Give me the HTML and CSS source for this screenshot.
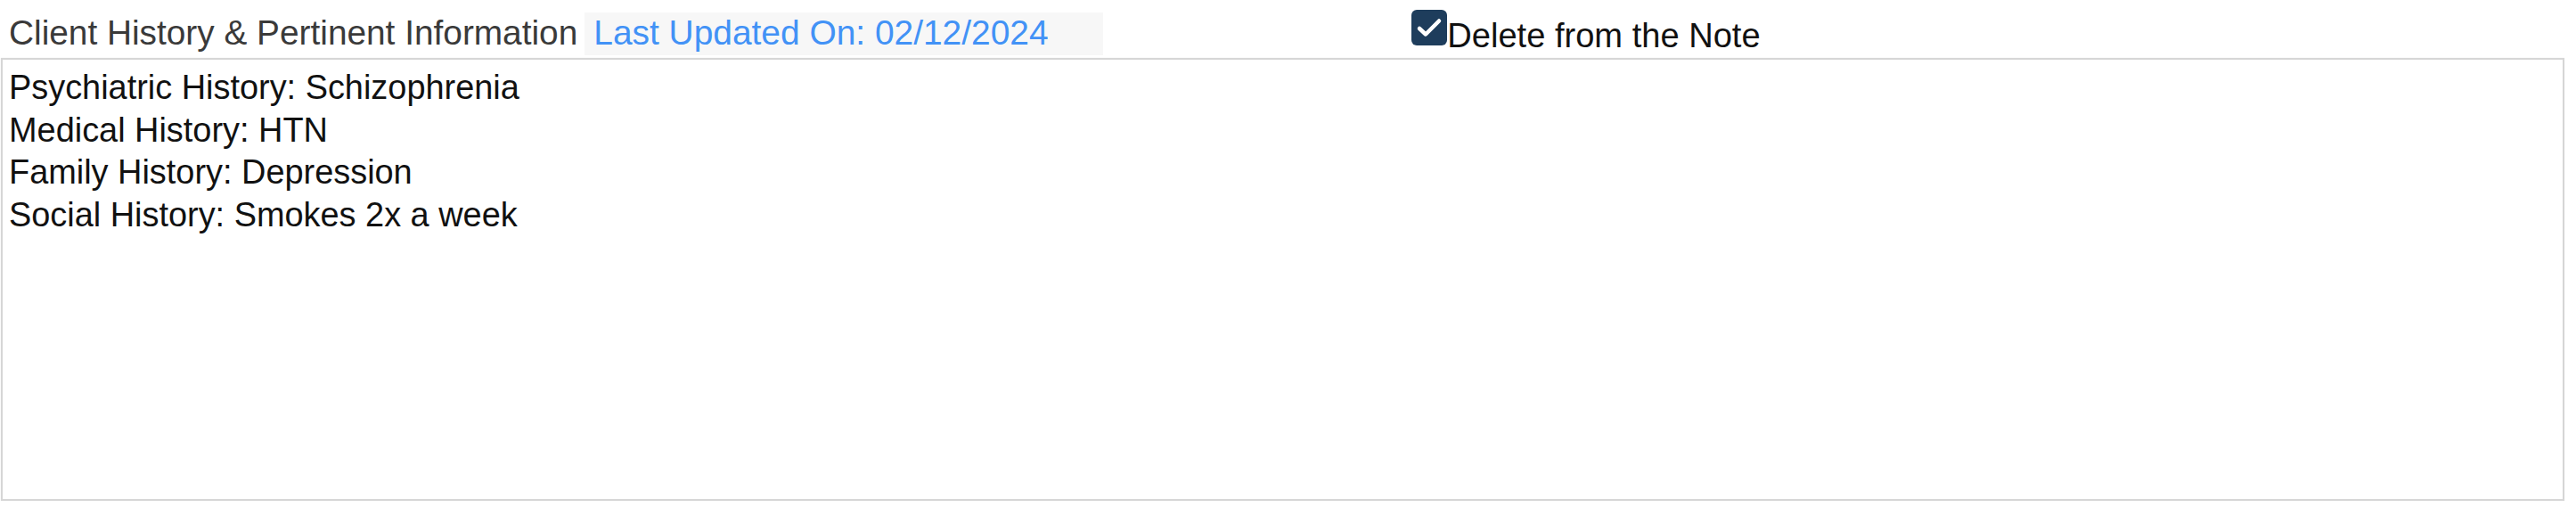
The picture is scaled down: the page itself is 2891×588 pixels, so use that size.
FILE: index.html
```html
<!DOCTYPE html>
<html lang="en">
<head>
    <meta charset="UTF-8">
    <title>Client History</title>
    <link rel="stylesheet" href="styles.css">
</head>
<body>
  <div class="history">
    <div class="history-head">
      <span class="history-label">Client History &amp; Pertinent Information</span>
      <span class="updated-on">Last Updated On: 02/12/2024</span>
      <label class="delete-note">
        <span class="check-box">
          <svg width="40" height="40" viewBox="0 0 40 40">
            <rect x="0" y="0" width="40" height="40" rx="6" fill="#1e3d5c"></rect>
            <path d="M9 21 L16 27.5 L31 12.5" fill="none" stroke="#fff" stroke-width="4.5" stroke-linecap="round" stroke-linejoin="round"></path>
          </svg>
        </span>
        <span class="delete-text">Delete from the Note</span>
      </label>
    </div>

    <div class="history-text">Psychiatric History: Schizophrenia
Medical History: HTN
Family History: Depression
Social History: Smokes 2x a week</div>
  </div>
</body>
</html>
```

FILE: styles.css
```css
body {
   margin: 0;
   background: #fff;
   font-family: "Liberation Sans", Arial, sans-serif;
}

.history {
   padding: 0 13px 0 1px;
}

.history-head {
   display: flex;
   align-items: flex-start;
   height: 65px;
   padding-left: 9px;
   box-sizing: border-box;
}

.history-label {
   margin-top: 14px;
   font-size: 38.8px;
   line-height: 46px;
   color: #3a3a3a;
   white-space: nowrap;
}

.updated-on {
   margin-top: 14px;
   margin-left: 8px;
   width: 582px;
   height: 48px;
   box-sizing: border-box;
   padding-left: 10px;
   background: #f7f7f7;
   color: #4292f6;
   font-size: 38.9px;
   line-height: 46px;
   white-space: nowrap;
}

.delete-note {
   display: flex;
   align-items: flex-start;
   margin-left: 346px;
   margin-top: 11px;
   cursor: pointer;
}

.check-box svg {
   display: block;
}

.delete-text {
   margin-top: 5px;
   font-size: 38.1px;
   line-height: 48px;
   color: #111;
   white-space: nowrap;
}

.history-text {
   height: 497px;
   box-sizing: border-box;
   border: 2px solid #d6d6d6;
   box-shadow: 0 0 1px #e6e6e6;
   padding: 8px 7px;
   font-size: 37.9px;
   line-height: 47.7px;
   color: #111;
   white-space: pre-line;
}
```
